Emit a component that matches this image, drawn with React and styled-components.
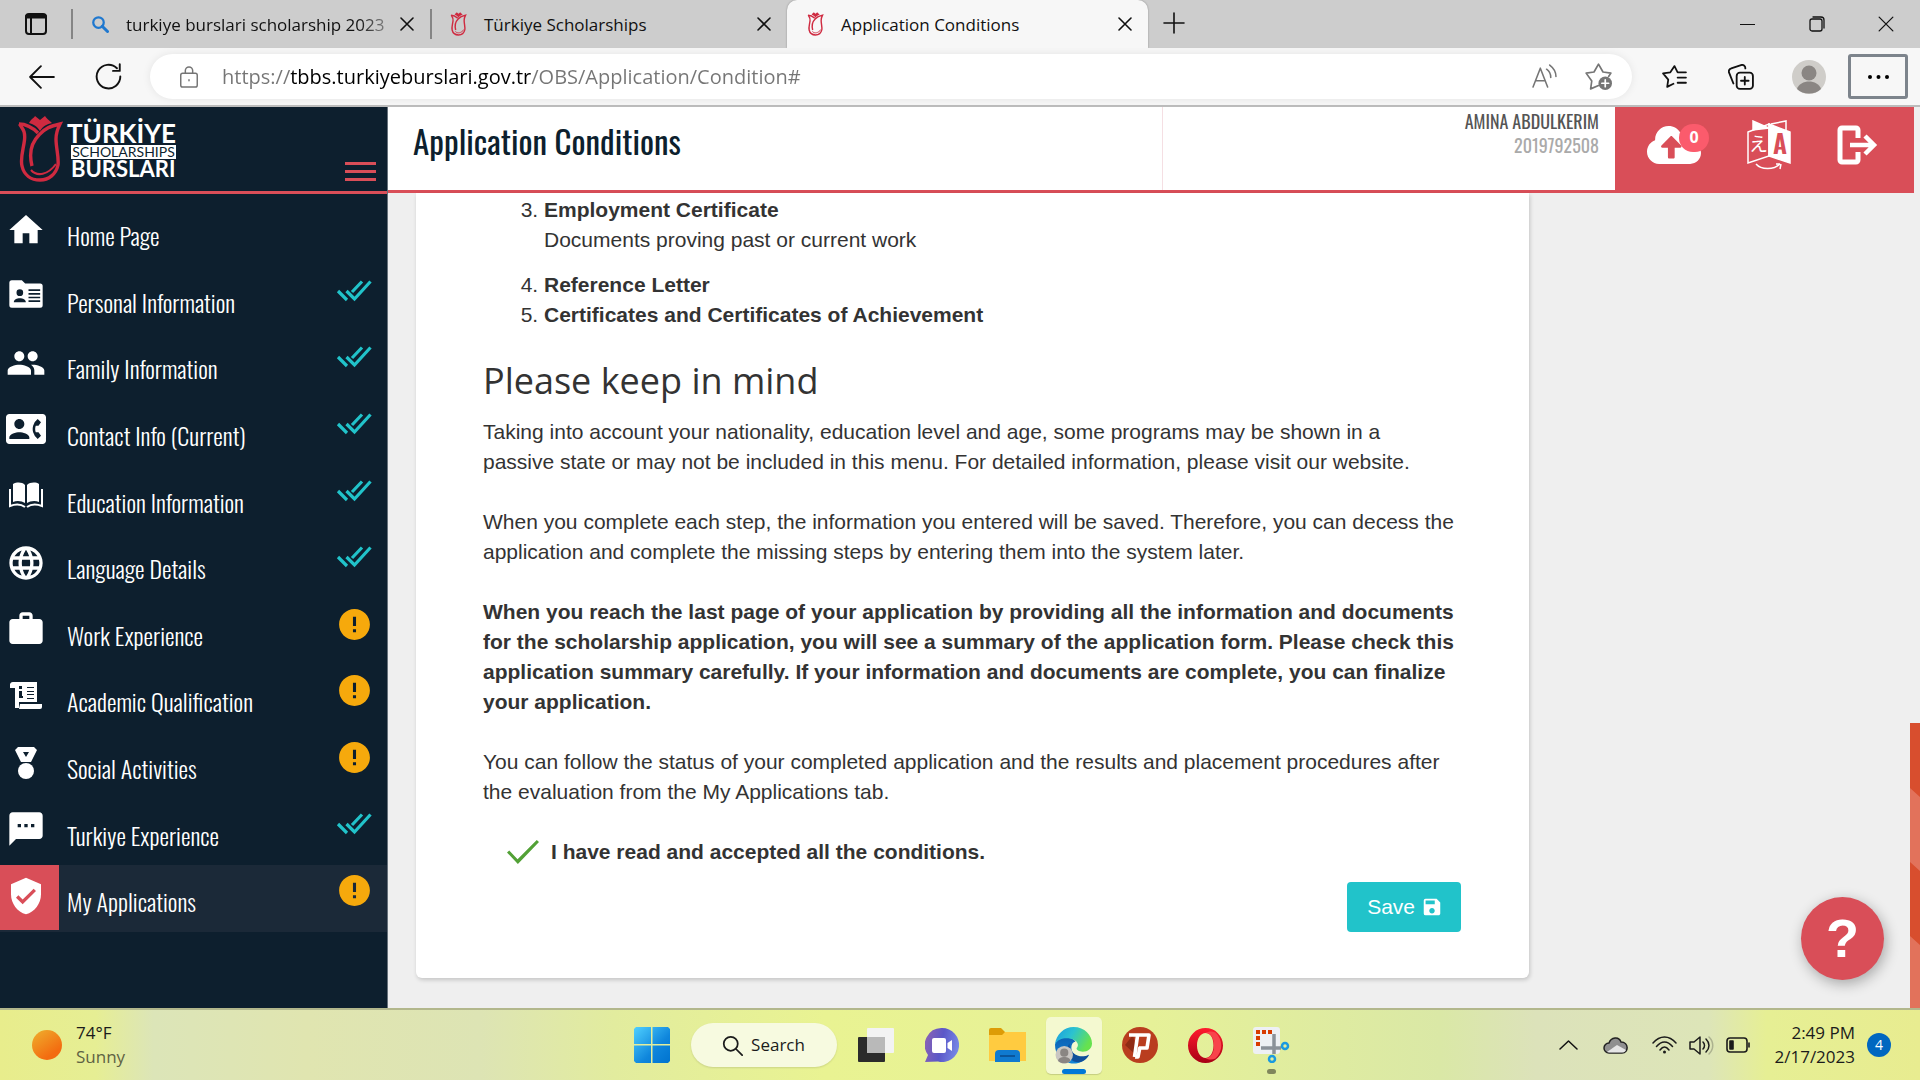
import React from "react";
import styled, { createGlobalStyle, css } from "styled-components";
import {
  MdHome, MdPeople, MdContactPhone, MdLanguage, MdWork, MdTextsms,
  MdVerifiedUser, MdError, MdSave,
} from "react-icons/md";
import { FaCloudUploadAlt } from "react-icons/fa";

const ui = `"Open Sans", "Noto Sans", sans-serif`;
const body = `"Liberation Sans", Arial, sans-serif`;
const narrow = `Oswald, "Liberation Sans Narrow", "Roboto Condensed", "DejaVu Sans Condensed", sans-serif`;

const red = "#d94e58";
const navy = "#0d1f2e";
const teal = "#21c3ca";
const amber = "#f6a90c";

const Global = createGlobalStyle`
  *, *::before, *::after { box-sizing: border-box; }
  body { margin: 0; font-family: ${body}; overflow: hidden; }
  button { font: inherit; color: inherit; background: none; border: 0; padding: 0; cursor: pointer; }
  a { color: inherit; text-decoration: none; }
  svg { display: block; flex: none; }
`;

const Screen = styled.div`
  display: flex;
  flex-direction: column;
  height: 100vh;
`;

/* ---------- browser chrome ---------- */

const TabStrip = styled.header`
  display: flex;
  align-items: stretch;
  height: 48px;
  background: #cdcdcd;
  font-family: ${ui};
  font-size: 17px;
  color: #111;
`;

const TabActions = styled.div`
  display: flex;
  align-items: center;
  justify-content: center;
  width: 71px;
`;

const Tab = styled.div`
  display: flex;
  align-items: center;
  width: ${(p) => p.$width}px;
  padding: 0 16px 0 20px;
  gap: 10px;
  ${(p) =>
    p.$active
      ? css`
          background: #f7f7f7;
          border-radius: 10px 10px 0 0;
          box-shadow: 0 0 2px #888;
          clip-path: inset(0 -4px 0 -4px);
        `
      : css`
          &::before {
            content: "";
            width: 2px;
            height: 30px;
            margin: 0 8px 0 -20px;
            background: #858585;
          }
        `}
`;

const TabTitle = styled.span`
  flex: 1;
  min-width: 0;
  margin-left: 7px;
  white-space: nowrap;
  ${(p) => p.$fade && css`mask-image: linear-gradient(90deg, #000 88%, rgba(0, 0, 0, 0.3));`}
`;

const IconButton = styled.button`
  display: flex;
  align-items: center;
  justify-content: center;
  width: ${(p) => p.$width || 24}px;
  height: ${(p) => p.$height || 40}px;
  color: ${(p) => p.$color || "#111"};
`;

const NewTab = styled(IconButton)`
  width: 52px;
  height: 46px;
`;

const WindowControls = styled.div`
  display: flex;
  align-items: center;
  margin-left: auto;
`;

const Toolbar = styled.div`
  display: flex;
  align-items: center;
  height: 59px;
  padding: 0 12px 0 9px;
  background: #f7f7f7;
  border-bottom: 2px solid #bcbcbc;
`;

const AddressBar = styled.label`
  display: flex;
  flex: 1;
  align-items: center;
  height: 45px;
  margin: 0 8px 0 9px;
  padding: 0 14px 0 28px;
  gap: 14px;
  border-radius: 23px;
  background: #fff;
  box-shadow: 0 0 8px rgba(0, 0, 0, 0.08);
  color: #757575;
`;

const Address = styled.input`
  flex: 1;
  height: 40px;
  padding: 0 0 0 8px;
  border: 0;
  outline: 0;
  font-family: ${ui};
  font-size: 20px;
  color: transparent;
  background: linear-gradient(90deg, #757575 76px, #000 76px, #000 317px, #757575 317px);
  background-clip: text;
  -webkit-background-clip: text;
`;

const MenuButton = styled.button`
  display: flex;
  align-items: center;
  justify-content: center;
  width: 60px;
  height: 45px;
  border: 3px solid #7d848c;
  border-radius: 3px;
`;

const Avatar = styled.button`
  width: 34px;
  height: 34px;
  margin: 0 22px 0 18px;
`;

/* ---------- web page ---------- */

const Viewport = styled.div`
  position: relative;
  display: flex;
  flex: 1;
  min-height: 0;
  overflow: hidden;
  background: #efefef;
`;

const Sidebar = styled.aside`
  width: 388px;
  flex: none;
  background: ${navy};
  border-right: 1px solid #66717b;
  color: #fff;
`;

const Brand = styled.div`
  display: flex;
  align-items: flex-start;
  height: 87px;
  padding: 8px 11px 0 17px;
  border-bottom: 3px solid ${red};
`;

const BrandWords = styled.div`
  display: flex;
  flex-direction: column;
  width: 109px;
  margin: 6px 0 0 4px;
  font-family: Lato, sans-serif;
  font-weight: 700;
  font-size: 26px;
  line-height: 24px;
  white-space: nowrap;
`;

const BrandBand = styled.span`
  align-self: flex-end;
  width: 105px;
  background: #fff;
  color: ${navy};
  font-size: 14px;
  line-height: 14px;
  font-weight: 400;
  text-align: center;
`;

const BrandLast = styled.span`
  padding-left: 4px;
  font-size: 22px;
  line-height: 20px;
`;

const Burger = styled.button`
  display: grid;
  gap: 5px;
  width: 31px;
  margin: 47px 0 0 auto;
  span {
    height: 3px;
    background: ${red};
  }
`;

const Menu = styled.nav`
  display: grid;
  grid-auto-rows: 1fr;
  min-height: 738px;
  padding-top: 5px;
`;

const MenuItem = styled.a`
  display: flex;
  align-items: flex-start;
  padding-right: 14px;
  background: ${(p) => (p.$active ? "#1b2938" : "none")};
`;

const MenuIcon = styled.span`
  display: flex;
  align-items: center;
  justify-content: center;
  width: 59px;
  height: 65px;
  padding: 0 7px 4px 0;
  background: ${(p) => (p.$active ? red : "none")};
`;

const MenuLabel = styled.span`
  flex: 1;
  padding: 20px 0 0 8px;
  font-family: ${narrow};
  font-weight: 300;
  font-size: 24px;
  line-height: 32px;
`;

const Status = styled.span`
  display: flex;
  justify-content: center;
  width: 38px;
  padding-top: 7px;
  color: ${(p) => (p.$done ? teal : amber)};
`;

const Page = styled.div`
  flex: 1;
  min-width: 0;
  display: flex;
  flex-direction: column;
`;

const PageHeader = styled.header`
  display: flex;
  height: 86px;
  margin-right: 6px;
  background: #fff;
  border-bottom: 3px solid ${red};
  font-family: ${narrow};
`;

const Title = styled.h1`
  flex: 1;
  margin: 0;
  padding: 12px 0 0 25px;
  border-right: 1px solid #f5dfe3;
  font-weight: 400;
  font-size: 33px;
  line-height: 44px;
  color: ${navy};
`;

const User = styled.div`
  width: 452px;
  padding: 2px 16px 0 0;
  text-align: right;
  font-size: 18px;
  line-height: 24px;
  color: #aaa;
  strong {
    display: block;
    font-weight: 400;
    color: #555;
  }
`;

const Actions = styled.div`
  display: flex;
  justify-content: space-between;
  width: 299px;
  padding: 14px 36px 0 32px;
  background: ${red};
  color: #fff;
`;

const Action = styled.button`
  position: relative;
  display: flex;
  height: 48px;
  align-items: center;
`;

const Count = styled.span`
  position: absolute;
  top: 3px;
  left: 32px;
  width: 30px;
  height: 28px;
  border-radius: 14px;
  background: #fb5b6c;
  font: 700 16px/26px ${ui};
`;

const Card = styled.main`
  width: calc(100% - 419px);
  margin-left: 28px;
  padding: 2px 68px 46px 67px;
  background: #fff;
  border-radius: 0 0 6px 6px;
  box-shadow: 1px 2px 4px rgba(0, 0, 0, 0.18);
  font-size: 21px;
  line-height: 30px;
  color: #333;
`;

const Documents = styled.ol`
  margin: 0;
  padding-left: 61px;
`;

const DocumentItem = styled.li`
  margin-bottom: ${(p) => (p.$spaced ? 15 : 0)}px;
  strong { display: block; }
`;

const Heading = styled.h2`
  margin: 31px 0 16px;
  font-family: ${ui};
  font-weight: 400;
  font-size: 36px;
  line-height: 40px;
`;

const Paragraph = styled.p`
  margin: 0 0 30px;
  font-weight: ${(p) => (p.$strong ? 700 : 400)};
`;

const Accept = styled.label`
  display: flex;
  align-items: center;
  gap: 12px;
  padding-left: 24px;
  font-weight: 700;
`;

const Tick = styled.input`
  appearance: none;
  width: 32px;
  height: 24px;
  margin: 0;
  background: #52a136;
  clip-path: polygon(0 52%, 7% 44%, 33% 80%, 93% 0, 100% 8%, 34% 100%);
`;

const FormFooter = styled.div`
  display: flex;
  justify-content: flex-end;
  margin-top: 15px;
`;

const SaveButton = styled.button`
  display: flex;
  align-items: center;
  gap: 6px;
  height: 50px;
  padding: 0 18px 0 20px;
  border-radius: 4px;
  background: ${teal};
  color: #fff;
`;

const Help = styled.button`
  position: absolute;
  right: 36px;
  bottom: 28px;
  width: 83px;
  height: 83px;
  border-radius: 50%;
  background: ${red};
  box-shadow: 2px 4px 14px rgba(0, 0, 0, 0.3);
  color: #fff;
  font-weight: 700;
  font-size: 54px;
  line-height: 83px;
  text-align: center;
`;

const Ribbon = styled.svg`
  position: absolute;
  right: 0;
  bottom: 0;
`;

/* ---------- desktop taskbar ---------- */

const Taskbar = styled.footer`
  display: grid;
  grid-template-columns: 1fr auto 1fr;
  align-items: center;
  height: 72px;
  flex: none;
  border-top: 2px solid #b2b78c;
  background: linear-gradient(90deg, #e8ed8c 0%, #e6ee94 5%, #dce5b8 8%, #e0e5b0 16%, #dde4b4 25%, #e2ec9e 32%,
    #e9f392 43%, #e6f198 60%, #dae8a6 75%, #dce2ba 80%, #dde5b8 89%, #e6ef94 92%, #e8ec90 100%);
  font-family: ${ui};
  font-size: 17px;
  line-height: 24px;
  color: #1b1b1b;
`;

const Weather = styled.button`
  display: flex;
  align-items: center;
  justify-self: start;
  gap: 14px;
  padding-left: 32px;
  text-align: left;
`;

const Sun = styled.span`
  width: 30px;
  height: 30px;
  border-radius: 50%;
  background: linear-gradient(145deg, #efb02e, #f36c10 75%);
`;

const WeatherText = styled.span`
  small {
    display: block;
    font-size: 17px;
    color: #5e6244;
  }
`;

const Apps = styled.div`
  display: flex;
  align-items: center;
  gap: 10px;
  padding-left: 3px;
`;

const AppButton = styled.button`
  position: relative;
  display: flex;
  align-items: center;
  justify-content: center;
  width: 56px;
  height: 57px;
  border-radius: 5px;
  ${(p) => p.$active && css`
    background: #f4f9d0;
    box-shadow: 0 1px 1px rgba(0, 0, 0, 0.15);
  `}
  ${(p) => p.$bar && css`
    &::after {
      content: "";
      position: absolute;
      bottom: 0;
      width: ${p.$bar}px;
      height: 5px;
      border-radius: 3px;
      background: ${p.$active ? "#0078d7" : "#80865c"};
    }
  `}
`;

const SearchPill = styled.button`
  display: flex;
  align-items: center;
  justify-content: center;
  gap: 8px;
  width: 146px;
  height: 44px;
  margin: 0 1px;
  border-radius: 22px;
  background: #f7fae0;
  box-shadow: 0 1px 2px rgba(0, 0, 0, 0.12);
`;

const Tray = styled.div`
  display: flex;
  align-items: center;
  justify-self: end;
  padding-right: 29px;
`;

const TrayGroup = styled.div`
  display: flex;
  align-items: center;
  gap: 12px;
  margin: 0 23px;
`;

const Clock = styled.time`
  text-align: right;
`;

const Badge = styled.span`
  width: 24px;
  height: 24px;
  margin-left: 12px;
  border-radius: 50%;
  background: #0067c0;
  color: #fff;
  font-size: 14px;
  text-align: center;
`;

/* ---------- drawings ---------- */

const Line = ({ size = 24, width, height, w = 1.5, box = "0 0 24 24", children }) => (
  <svg width={width || size} height={height || size} viewBox={box} fill="none" stroke="currentColor"
    strokeWidth={w} strokeLinecap="round" strokeLinejoin="round">{children}</svg>
);

const Cross = ({ size = 14, w = 1.6 }) => (
  <Line size={size} w={w} box="0 0 14 14"><path d="M1 1l12 12M13 1L1 13" /></Line>
);

const Tulip = ({ width, height, w = 3.4 }) => (
  <svg width={width} height={height} viewBox="0 0 46 68" fill="none" stroke="#cf2a40" strokeWidth={w}>
    <path d="M2.500 9c3 5 6 7 5 16S3 43 5 51c2 9 9 14 18 14s16-6 18-15c1-8-2-17-2-26 0-7 2-11 4-15-9 2-15 4-21 11C14 28 12 39 15 51" />
    <path d="M2 9c7 0 14 4 19 9" />
    <path d="M14 55c6 7 17 5 25-6" strokeWidth={w * 0.6} />
    <path d="M12 8c2-4 5-5 6-7l5 4 5-4c1 2 4 4 7 7-5 1-9 3-12 8-3-5-7-7-11-8z" fill="#cf2a40" stroke="none" />
  </svg>
);

const DoubleCheck = () => (
  <svg width="36" height="36" viewBox="0 0 36 36" fill="none" stroke="currentColor" strokeWidth="3.200">
    <path d="M2 18l9 9M10.500 18l8 8L34.500 8.500M26 8.500L16 19" />
  </svg>
);

const FolderPerson = () => (
  <svg width="40" height="40" viewBox="0 0 24 24" fill="currentColor">
    <path fillRule="evenodd" d="M3.500 2.500h6l2 2h9A1.500 1.500 0 0 1 22 6v11.500a1.500 1.500 0 0 1-1.500 1.500h-17A1.500 1.500 0 0 1 2 17.500V4a1.500 1.500 0 0 1 1.500-1.500zM8.300 8a2 2 0 1 0 0 4 2 2 0 0 0 0-4zm-3.600 7.800h7.200c0-3.200-7.200-3.200-7.200 0zM13.500 8v1h7V8zm0 2.200v1h7v-1zm0 2.200v1h7v-1zm0 2.200v1h7v-1z" />
  </svg>
);

const OpenBook = () => (
  <svg width="38" height="28" viewBox="0 0 38 28" fill="currentColor">
    <path d="M6 2c4-2 9-2 12 1v18c-3-2-8-3-12-1zM20 3c3-3 9-3 12-1v18c-4-2-9-1-12 1z" />
    <path d="M3 7v17c5-2 11-2 15 1M35 7v17c-5-2-11-2-15 1" fill="none" stroke="currentColor" strokeWidth="2" />
  </svg>
);

const Scroll = () => (
  <svg width="34" height="30" viewBox="0 0 34 30" fill="currentColor">
    <path fillRule="evenodd" d="M1 7V3a3 3 0 0 1 3-2h24v20H10v6H6V7zM10 5v3h3V5zm0 5v7h4v-2h-1v-5zm8-4v1h7V6zm0 4v1h7v-1zm0 3v1h7v-1zm0 4v1h7v-1z" />
    <path d="M11 23h22v3a2 2 0 0 1-2 2H10z" />
  </svg>
);

const Medal = () => (
  <svg width="24" height="34" viewBox="0 0 24 34" fill="currentColor">
    <path fillRule="evenodd" d="M4 1h16l3 3-6 12H7L1 4zm5 5l3 5 3-5z" />
    <circle cx="12" cy="25" r="8" />
  </svg>
);

const Translate = () => (
  <svg width="44" height="50" viewBox="0 0 44 50" fill="none" stroke="currentColor" strokeWidth="1.500">
    <path d="M1 12l21-8v32L1 43z" />
    <path d="M22 4l21 8v31l-21-7z" fill="currentColor" />
    <path d="M6 10V1l16 7z" fill="currentColor" />
    <path d="M24 4l15-3v9" />
    <path d="M9 44c5 6 18 6 24 0m0 0l-4 0m5 0l-1 5" />
    <text x="2" y="31" fontSize="19" fontFamily="Noto Sans CJK JP" fill="currentColor" stroke="none">え</text>
    <text x="26" y="34" fontSize="26" fontWeight="600" fontFamily="Oswald, Liberation Sans" fill={red} stroke="none">A</text>
  </svg>
);

const SignOut = () => (
  <svg width="41" height="40" viewBox="0 0 41 40" fill="none" stroke="currentColor" strokeWidth="5" strokeLinejoin="round">
    <path d="M21 13V5a2 2 0 0 0-2-2H5a2 2 0 0 0-2 2v30a2 2 0 0 0 2 2h14a2 2 0 0 0 2-2v-8" />
    <path d="M13 20h23M28 11l9 9-9 9" strokeWidth="4.500" strokeLinejoin="miter" />
  </svg>
);

const WindowsLogo = () => (
  <svg width="36" height="36" viewBox="0 0 36 36">
    <defs><linearGradient id="win" x1="0" y1="0" x2="1" y2="1" gradientUnits="objectBoundingBox">
      <stop stopColor="#4fd0ff" /><stop offset=".6" stopColor="#0f86dc" /><stop offset="1" stopColor="#0073cf" /></linearGradient></defs>
    <path fill="url(#win)" d="M2 0h15v17H0V2zM18.500 0H34l2 2v15H18.500zM0 18.500h17V36H2l-2-2zM18.500 18.500H36V34l-2 2H18.500z" />
  </svg>
);

const TaskView = () => (
  <svg width="36" height="34" viewBox="0 0 36 34">
    <rect y="9" width="27" height="25" rx="1" fill="#2b2b2b" />
    <rect x="9" width="27" height="25" rx="1" fill="#f3f3f3" />
    <path d="M9 9h18v16H9z" fill="#b9b9b9" />
  </svg>
);

const Chat = () => (
  <svg width="34" height="35" viewBox="0 0 34 35">
    <defs><linearGradient id="chat" x1="0" y1=".3" x2="1" y2=".5">
      <stop stopColor="#8a62b4" /><stop offset=".5" stopColor="#5b57c8" /><stop offset="1" stopColor="#7688e6" /></linearGradient></defs>
    <path fill="url(#chat)" d="M17 0a17 17 0 1 1-4 33.500L0 34l3-7A17 17 0 0 1 17 0z" />
    <rect x="7" y="10" width="14" height="15" rx="2" fill="#fff" />
    <path d="M22.500 15l4.500-3v11l-4.500-3z" fill="#fff" />
  </svg>
);

const Folder = () => (
  <svg width="37" height="34" viewBox="0 0 37 34">
    <path d="M0 2a2 2 0 0 1 2-2h10l4 4h20v8H0z" fill="#dd9c06" />
    <path d="M0 7h13l3-3h21v29H0z" fill="#ffcb40" />
    <path d="M6 34V26a4 4 0 0 1 4-4h17a4 4 0 0 1 4 4v8z" fill="#0f7ad0" />
    <path d="M11 27h15v2H11z" fill="#0a559b" />
  </svg>
);

const Edge = () => (
  <svg width="37" height="37" viewBox="0 0 36 36">
    <defs>
      <linearGradient id="e1" x1="0" y1="0" x2="1" y2=".4"><stop stopColor="#199be2" /><stop offset=".5" stopColor="#2cc3cf" /><stop offset="1" stopColor="#66e24f" /></linearGradient>
      <linearGradient id="e2" x1="0" y1="0" x2="0" y2="1"><stop stopColor="#0c61b4" /><stop offset="1" stopColor="#1287d8" /></linearGradient>
    </defs>
    <path fill="url(#e2)" d="M0 17c2-8 14-10 20-3-6 1-6 13 4 15 5 1 9-2 9-2-4 7-12 10-19 8C6 33 0 27 0 17z" />
    <path fill="#10509a" d="M14 16c-5 8 0 20 11 18 4-1 7-4 8-7-8 4-19 0-19-11z" />
    <path fill="url(#e1)" d="M0 17C1 7 9 0 18 0c11 0 18 8 18 16 0 5-4 8-9 8-4 0-6-2-6-3s2-2 1-5c-2-6-18-8-22 1z" />
    <circle cx="9" cy="27" r="8.500" fill="#c9c6c2" />
    <circle cx="9" cy="25" r="4" fill="#8a8683" />
    <path fill="#8a8683" d="M3 33c0-5 12-5 12 0-3 3-9 3-12 0z" />
  </svg>
);

const Psiphon = () => (
  <svg width="36" height="36" viewBox="0 0 36 36">
    <circle cx="18" cy="18" r="18" fill="#b93d1f" />
    <path d="M3 18l8-10 5 22z" fill="#8f2a14" />
    <g fill="none" stroke="#fff" strokeWidth="3.600" strokeLinejoin="round"><path d="M7 8h20l-2 13h-8M15.500 9l-3 21M18 20l-2 10h-3" /></g>
  </svg>
);

const Opera = () => (
  <svg width="35" height="35" viewBox="0 0 35 35">
    <defs><linearGradient id="op" x1="0" y1="0" x2="0" y2="1"><stop stopColor="#ff1b2d" /><stop offset="1" stopColor="#a70014" /></linearGradient></defs>
    <path fillRule="evenodd" fill="url(#op)" d="M17.500 0a17.500 17.500 0 1 0 0 35 17.500 17.500 0 0 0 0-35zm0 5c5 0 8 5 8 12.500S22 30 17.500 30 9 25 9 17.500 13 5 17.500 5z" />
    <path fill="#f8444b" d="M17.500 30C23 30 26 25 26 17.500S23 5 17.500 5c3-2 7-2 10-.500a17.500 17.500 0 0 1 0 26c-3 1.500-7 1.500-10-.500z" />
  </svg>
);

const Snip = () => (
  <svg width="37" height="36" viewBox="0 0 37 36">
    <rect width="27" height="27" rx="3" fill="#eef0f4" />
    <path d="M5 19V5h16" fill="none" stroke="#d83b01" strokeWidth="4" strokeDasharray="4 2" />
    <path d="M8 21h20M21 7v20" stroke="#8b9199" strokeWidth="3.500" />
    <g fill="none" stroke="#1a9ae0" strokeWidth="2.500"><circle cx="32" cy="19" r="3" /><circle cx="19" cy="32" r="3" /></g>
  </svg>
);

const menu = [
  ["Home Page", <MdHome size={40} />, null],
  ["Personal Information", <FolderPerson />, "done"],
  ["Family Information", <MdPeople size={40} />, "done"],
  ["Contact Info (Current)", <MdContactPhone size={40} />, "done"],
  ["Education Information", <OpenBook />, "done"],
  ["Language Details", <MdLanguage size={40} />, "done"],
  ["Work Experience", <MdWork size={40} />, "todo"],
  ["Academic Qualification", <Scroll />, "todo"],
  ["Social Activities", <Medal />, "todo"],
  ["Turkiye Experience", <MdTextsms size={40} />, "done"],
  ["My Applications", <MdVerifiedUser size={40} />, "todo", true],
];

function BrowserChrome() {
  return (
    <>
      <TabStrip>
        <TabActions>
          <IconButton aria-label="Tab actions">
            <Line size={24} w={2}><rect x="2" y="2" width="20" height="20" rx="3" /><path d="M3 4.500h18" strokeWidth="4" /><path d="M7 6v16" /></Line>
          </IconButton>
        </TabActions>
        <Tab $width={359}>
          <Line size={18} w={3}><g stroke="#1f78cf"><circle cx="10" cy="10" r="7" /><path d="M15 15l7 7" strokeWidth="4" /></g></Line>
          <TabTitle $fade>turkiye burslari scholarship 2023</TabTitle>
          <IconButton $width={14} aria-label="Close tab"><Cross /></IconButton>
        </Tab>
        <Tab $width={357}>
          <Tulip width={17} height={24} w={4} />
          <TabTitle>Türkiye Scholarships</TabTitle>
          <IconButton $width={14} aria-label="Close tab"><Cross /></IconButton>
        </Tab>
        <Tab $width={361} $active>
          <Tulip width={17} height={24} w={4} />
          <TabTitle>Application Conditions</TabTitle>
          <IconButton $width={14} aria-label="Close tab"><Cross /></IconButton>
        </Tab>
        <NewTab aria-label="New tab"><Line size={22} w={1.6} box="0 0 22 22"><path d="M11 1v20M1 11h20" /></Line></NewTab>
        <WindowControls>
          <IconButton $width={69} aria-label="Minimize"><Line size={15} w={1.2} box="0 0 15 15"><path d="M0 7.500h15" /></Line></IconButton>
          <IconButton $width={69} aria-label="Restore"><Line size={16} w={1.3} box="0 0 16 16"><rect x="1" y="3" width="12" height="12" rx="2" /><path d="M4 1h8a3 3 0 0 1 3 3v8" /></Line></IconButton>
          <IconButton $width={69} aria-label="Close"><Cross size={16} w={1.1} /></IconButton>
        </WindowControls>
      </TabStrip>
      <Toolbar>
        <IconButton $width={66} aria-label="Back"><Line size={26} w={1.7}><path d="M23 12H1M11 2L1 12l10 10" /></Line></IconButton>
        <IconButton $width={66} aria-label="Refresh"><Line size={27} w={1.7}><path d="M22.500 12A10.500 10.500 0 1 1 19.500 4.700M22 1v6h-6" /></Line></IconButton>
        <AddressBar>
          <Line width={22} height={24} w={1.6}><rect x="3" y="8" width="18" height="15" rx="2" /><path d="M8 8V5a4 4 0 0 1 8 0v3M12 15v1" /></Line>
          <Address aria-label="Address" defaultValue="https://tbbs.turkiyeburslari.gov.tr/OBS/Application/Condition#" />
          <IconButton $width={40} $color="#757575" aria-label="Read aloud">
            <Line size={25} w={1.5}><path d="M1 22L8 4l7 18M4 16h8M14 5c3 2 4 4 4 8M17 1c4 3 6 6 6 11" /></Line>
          </IconButton>
          <IconButton $width={40} $color="#757575" aria-label="Add to favorites">
            <Line size={27} w={1.5}><path d="M12 20l-7 3 1-7L1 9l7-1 4-7 4 7 7 1-2 3" /><circle cx="18" cy="18" r="6" fill="currentColor" stroke="none" /><path d="M18 15v6M15 18h6" stroke="#fff" /></Line>
          </IconButton>
        </AddressBar>
        <IconButton $width={68} aria-label="Favorites"><Line size={25} w={1.7}><path d="M11 19l-6 3 1-7L1 9l7-1 4-6 3 6h8M15 13h8M15 18h8" /></Line></IconButton>
        <IconButton $width={66} aria-label="Collections"><Line size={26} w={1.7}><rect x="8" y="8" width="15" height="15" rx="3" /><path d="M15.500 12v7M12 15.500h7M5 18L1 8a3 3 0 0 1 2-4l9-3a3 3 0 0 1 4 3" /></Line></IconButton>
        <Avatar aria-label="Profile">
          <svg width="34" height="34" viewBox="0 0 34 34"><circle cx="17" cy="17" r="17" fill="#cfcdc9" /><circle cx="17" cy="13" r="7.500" fill="#8a8683" /><path d="M5 29c3-10 21-10 24 0-6 6-18 6-24 0z" fill="#8a8683" /></svg>
        </Avatar>
        <MenuButton aria-label="Settings and more">
          <svg width="21" height="4" viewBox="0 0 21 4"><circle cx="2" cy="2" r="2" /><circle cx="10.500" cy="2" r="2" /><circle cx="19" cy="2" r="2" /></svg>
        </MenuButton>
      </Toolbar>
    </>
  );
}

function SideMenu() {
  return (
    <Sidebar>
      <Brand>
        <Tulip width={46} height={68} />
        <BrandWords>
          <span>TÜRKİYE</span>
          <BrandBand>SCHOLARSHIPS</BrandBand>
          <BrandLast>BURSLARI</BrandLast>
        </BrandWords>
        <Burger aria-label="Toggle menu"><span /><span /><span /></Burger>
      </Brand>
      <Menu>
        {menu.map(([label, icon, status, active]) => (
          <MenuItem key={label} href="#" $active={active}>
            <MenuIcon $active={active}>{icon}</MenuIcon>
            <MenuLabel>{label}</MenuLabel>
            {status && (
              <Status $done={status === "done"}>
                {status === "done" ? <DoubleCheck /> : <MdError size={37} />}
              </Status>
            )}
          </MenuItem>
        ))}
      </Menu>
    </Sidebar>
  );
}

function Conditions() {
  return (
    <Card>
      <Documents start={3}>
        <DocumentItem $spaced><strong>Employment Certificate</strong>Documents proving past or current work</DocumentItem>
        <DocumentItem><strong>Reference Letter</strong></DocumentItem>
        <DocumentItem><strong>Certificates and Certificates of Achievement</strong></DocumentItem>
      </Documents>
      <Heading>Please keep in mind</Heading>
      <Paragraph>
        Taking into account your nationality, education level and age, some programs may be shown in a
        <br />
        passive state or may not be included in this menu. For detailed information, please visit our website.
      </Paragraph>
      <Paragraph>
        When you complete each step, the information you entered will be saved. Therefore, you can decess the
        application and complete the missing steps by entering them into the system later.
      </Paragraph>
      <Paragraph $strong>
        When you reach the last page of your application by providing all the information and documents
        for the scholarship application, you will see a summary of the application form. Please check this
        application summary carefully. If your information and documents are complete, you can finalize
        your application.
      </Paragraph>
      <Paragraph>
        You can follow the status of your completed application and the results and placement procedures after
        the evaluation from the My Applications tab.
      </Paragraph>
      <Accept><Tick type="checkbox" defaultChecked />I have read and accepted all the conditions.</Accept>
      <FormFooter><SaveButton>Save <MdSave size={22} /></SaveButton></FormFooter>
    </Card>
  );
}

function DesktopBar() {
  return (
    <Taskbar>
      <Weather><Sun /><WeatherText>74°F<small>Sunny</small></WeatherText></Weather>
      <Apps>
        <AppButton aria-label="Start"><WindowsLogo /></AppButton>
        <SearchPill><Line size={21} w={2}><circle cx="10" cy="10" r="8" /><path d="M16 16l7 7" /></Line>Search</SearchPill>
        <AppButton aria-label="Task view"><TaskView /></AppButton>
        <AppButton aria-label="Chat"><Chat /></AppButton>
        <AppButton aria-label="File Explorer"><Folder /></AppButton>
        <AppButton aria-label="Edge" $active $bar={24}><Edge /></AppButton>
        <AppButton aria-label="Psiphon"><Psiphon /></AppButton>
        <AppButton aria-label="Opera"><Opera /></AppButton>
        <AppButton aria-label="Snipping Tool" $bar={9}><Snip /></AppButton>
      </Apps>
      <Tray>
        <IconButton aria-label="Show hidden icons"><Line width={19} height={10} w={1.5} box="0 0 19 10"><path d="M1 9l8.500-8L18 9" /></Line></IconButton>
        <TrayGroup>
          <svg width="25" height="17" viewBox="0 0 25 17"><path d="M6 16a5 5 0 0 1 0-10C8 0 16-1 18 5c8 0 8 11 1 11z" fill="#909090" stroke="#222" strokeWidth="1.500" /><path d="M4 15l10-7 9 5c-1 2-2 2.500-4 2.500H6z" fill="#e6e6e6" /></svg>
          <span />
          <Line width={25} height={18} w={1.5} box="0 0 25 18"><path d="M1 7c7-8 16-8 23 0M4.500 10.500c5-6 11-6 16 0M8 14c3-4 6-4 9 0" /><circle cx="12.500" cy="16" r="1.500" fill="currentColor" stroke="none" /></Line>
          <Line width={25} height={19} w={1.5} box="0 0 25 19"><path d="M1 6h4l6-5v17l-6-5H1zM14 6c2 2 2 5 0 7M17 3c4 4 4 9 0 13" /><path d="M20 1c5 5 5 12 0 17" opacity=".25" /></Line>
          <Line width={25} height={16} w={1.6} box="0 0 25 16"><rect x="1" y="1" width="20" height="14" rx="3" /><path d="M4 4h3v8H4zM23 6v4" fill="currentColor" /></Line>
        </TrayGroup>
        <Clock>2:49 PM<br />2/17/2023</Clock>
        <Badge>4</Badge>
      </Tray>
    </Taskbar>
  );
}

export default function App() {
  return (
    <Screen>
      <Global />
      <BrowserChrome />
      <Viewport>
        <SideMenu />
        <Page>
          <PageHeader>
            <Title>Application Conditions</Title>
            <User><strong>AMINA ABDULKERIM</strong>2019792508</User>
            <Actions>
              <Action aria-label="Uploads"><FaCloudUploadAlt size={54} /><Count>0</Count></Action>
              <Action aria-label="Language"><Translate /></Action>
              <Action aria-label="Sign out"><SignOut /></Action>
            </Actions>
          </PageHeader>
          <Conditions />
        </Page>
        <Ribbon width="10" height="285" viewBox="0 0 10 285">
          <path d="M0 0h10v285H0z" fill="#d84e2e" />
          <path d="M0 65l10 9v74l-10-9zM0 213l10 9v63H0z" fill="#e2725b" />
        </Ribbon>
        <Help aria-label="Help">?</Help>
      </Viewport>
      <DesktopBar />
    </Screen>
  );
}
